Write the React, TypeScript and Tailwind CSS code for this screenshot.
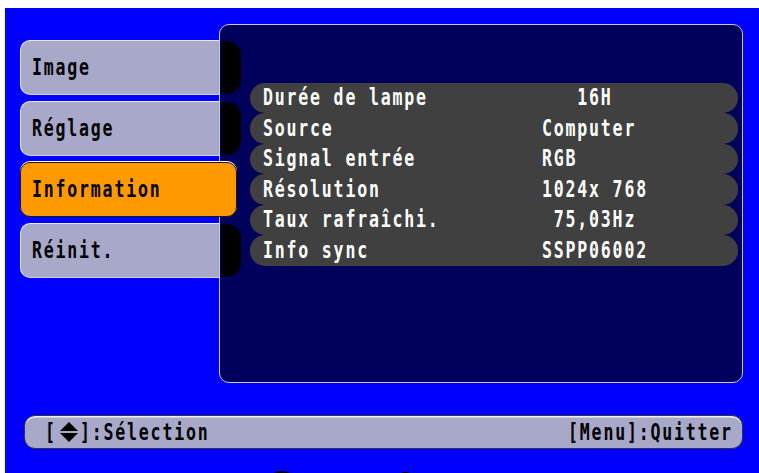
import React from "react";

const T = ({ children, right = false }: { children: React.ReactNode; right?: boolean }) => (
  <span
    className={
      "inline-block whitespace-pre tracking-[2.5px] scale-x-[0.72] " +
      (right ? "origin-right" : "origin-left")
    }
  >
    {children}
  </span>
);

const tabs = [
  { label: "Image", active: false },
  { label: "Réglage", active: false },
  { label: "Information", active: true },
  { label: "Réinit.", active: false },
];

const rows: [string, string][] = [
  ["Durée de lampe", "   16H"],
  ["Source", "Computer"],
  ["Signal entrée", "RGB"],
  ["Résolution", "1024x 768"],
  ["Taux rafraîchi.", " 75,03Hz"],
  ["Info sync", "SSPP06002"],
];

function Arrows() {
  return (
    <svg width="20" height="22" viewBox="0 0 20 22" className="mx-[1px]">
      <polygon points="10,1 19,10 1,10" fill="#000" />
      <polygon points="1,12 19,12 10,21" fill="#000" />
    </svg>
  );
}

export default function App() {
  return (
    <div className="w-[759px] h-[473px] bg-white overflow-hidden font-['DejaVu_Sans_Mono',monospace] font-bold text-[23px] leading-none">
      <div className="ml-[5px] mt-[8px] w-[754px] h-[465px] bg-[#0000ff] flex flex-col overflow-hidden">
        <div className="shrink-0 flex items-start pl-[15px] pt-[16px]">
          {/* tabs */}
          <div className="relative z-10 w-[199px] pt-[16px] flex flex-col gap-[6px]">
            {tabs.map((t) =>
              t.active ? (
                <div
                  key={t.label}
                  className="h-[55px] w-[217px] rounded-[10px] bg-[#ff9900] border-[1.5px] border-[#1a1a1a] shadow-[0_-1px_0_#ffffff] flex items-center pl-[11px] text-black"
                >
                  <T>{t.label}</T>
                </div>
              ) : (
                <div key={t.label} className="relative h-[55px] w-[199px]">
                  <div className="h-full w-full rounded-l-[10px] bg-[#a8a8c8] border-l-[1.5px] border-t-[1.5px] border-b-[1px] border-l-[#e8e8f4] border-t-[#e8e8f4] border-b-[#d0d0e4] flex items-center pl-[11px] text-black">
                    <T>{t.label}</T>
                  </div>
                  <div className="absolute left-[201px] top-[1px] h-[53px] w-[20px] rounded-r-[14px] rounded-l-[4px] bg-black" />
                </div>
              )
            )}
          </div>
          {/* panel */}
          <div className="w-[524px] h-[359px] rounded-[10px] border-[1.5px] border-[#c8c8e0] bg-[#00005c] pt-[57.5px] pl-[29.5px] pr-[4.5px]">
            <div className="flex flex-col">
              {rows.map(([k, v]) => (
                <div
                  key={k}
                  className="h-[30.5px] rounded-[15px] bg-[#404040] grid grid-cols-[279px_1fr] items-center pl-[13px] text-white"
                >
                  <T>{k}</T>
                  <T>{v}</T>
                </div>
              ))}
            </div>
          </div>
        </div>
        {/* footer */}
        <div className="shrink-0 ml-[19px] mt-[32px] w-[719px] h-[34px] rounded-[11px] bg-[#a8a8c8] border-[1.5px] border-[#303048] shadow-[inset_0_1.5px_0_#f0f0f8] flex items-center justify-between pl-[20px] pr-[9px] text-black">
          <div className="flex items-center">
            <T>[</T>
            <span className="-ml-[3px]"><Arrows /></span>
            <T>]:Sélection</T>
          </div>
          <T right>[Menu]:Quitter</T>
        </div>
        <div className="shrink-0 mt-[18px] pl-[262px] text-[34px] text-black font-bold font-['DejaVu_Sans',sans-serif] leading-none">
          Computer
        </div>
      </div>
    </div>
  );
}
